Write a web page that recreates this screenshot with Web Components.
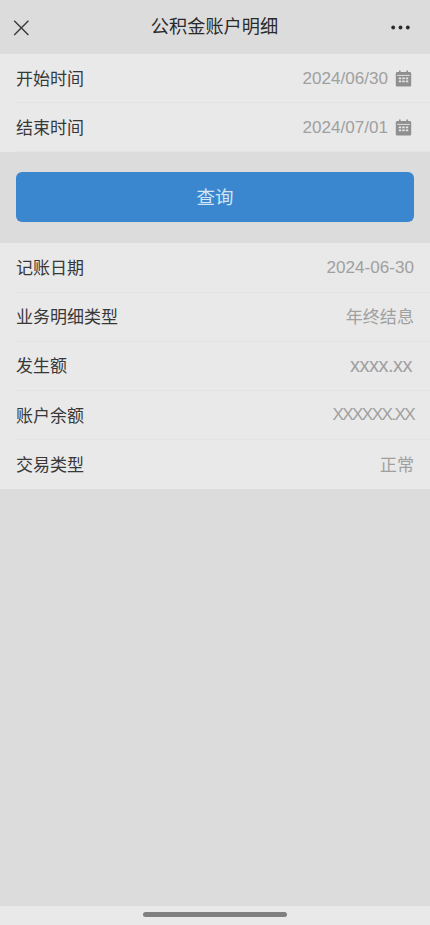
<!DOCTYPE html>
<html lang="zh">
<head>
<meta charset="utf-8">
<title>公积金账户明细</title>
<style>
    html, body { margin: 0; height: 100%; }
    body {
        font-family: "Liberation Sans", "Noto Sans CJK SC", sans-serif;
        background: #dcdcdc;
    }
    #page {
        height: 925px;
        display: flex;
        flex-direction: column;
    }
    .spacer { flex: 1; }
    .date { display: block; padding-top: 4px; }
    .small-x { display: block; padding-top: 2px; font-size: 20px; letter-spacing: -0.5px; margin-right: 2px; }
    .big-x { display: block; padding-top: 2px; letter-spacing: -1.6px; }
</style>
</head>
<body>
<div id="page">
    <nav-bar>公积金账户明细</nav-bar>
    <row-group>
        <info-row label="开始时间" calendar><span class="date">2024/06/30</span></info-row>
        <info-row label="结束时间" calendar><span class="date">2024/07/01</span></info-row>
    </row-group>
    <query-button>查询</query-button>
    <row-group>
        <info-row label="记账日期"><span class="date">2024-06-30</span></info-row>
        <info-row label="业务明细类型">年终结息</info-row>
        <info-row label="发生额"><span class="small-x">xxxx.xx</span></info-row>
        <info-row label="账户余额"><span class="big-x">XXXXXX.XX</span></info-row>
        <info-row label="交易类型" last>正常</info-row>
    </row-group>
    <div class="spacer"></div>
    <home-bar></home-bar>
</div>

<script>
class NavBar extends HTMLElement {
    constructor() {
        super();
        this.attachShadow({ mode: 'open' });
        this.shadowRoot.innerHTML = `
        <style>
            :host {
                display: grid;
                grid-template-columns: 1fr auto 1fr;
                align-items: center;
                height: 54px;
                padding: 0 20px 0 13px;
                box-sizing: border-box;
                background: #dcdcdc;
                color: #2a2a2a;
            }
            .title {
                font-size: 18.2px;
                line-height: 54px;
                position: relative;
                left: 3px;
            }
            svg { display: block; }
            .more { justify-self: end; }
        </style>
        <svg width="17" height="17" viewBox="0 0 17 17" fill="none" stroke="#3a3a3a" stroke-width="1.4">
            <path d="M1.2 1.7 L15.4 15.9 M15.4 1.7 L1.2 15.9"/>
        </svg>
        <span class="title"><slot></slot></span>
        <svg class="more" width="19" height="5" viewBox="0 0 19 5" fill="#2b2b2b">
            <circle cx="2.2" cy="2.5" r="1.9"/>
            <circle cx="9.5" cy="2.5" r="1.9"/>
            <circle cx="16.8" cy="2.5" r="1.9"/>
        </svg>`;
    }
}

class RowGroup extends HTMLElement {
    constructor() {
        super();
        this.attachShadow({ mode: 'open' });
        this.shadowRoot.innerHTML = `
        <style>
            :host {
                display: block;
                background: #e9e9e9;
            }
        </style>
        <slot></slot>`;
    }
}

class InfoRow extends HTMLElement {
    constructor() {
        super();
        this.attachShadow({ mode: 'open' });
        const icon = this.hasAttribute('calendar') ? `
        <svg class="cal" width="17" height="17" viewBox="0 0 17 17">
            <path fill="#8f8f8f" d="M4 0.5h1.6v1.6h5.8V0.5H13v1.6h1.6c.9 0 1.6.7 1.6 1.6v11.2c0 .9-.7 1.6-1.6 1.6H2.4c-.9 0-1.6-.7-1.6-1.6V3.7c0-.9.7-1.6 1.6-1.6H4z"/>
            <path fill="#e9e9e9" d="M2.2 4.9h12.6v.9H2.2z"/>
            <path fill="#e9e9e9" d="M3.8 7.6h2.4v1.6H3.8zM7.3 7.6h2.4v1.6H7.3zM10.8 7.6h2.4v1.6h-2.4zM3.8 10.6h2.4v1.6H3.8zM7.3 10.6h2.4v1.6H7.3zM10.8 10.6h2.4v1.6h-2.4z"/>
        </svg>` : '';
        this.shadowRoot.innerHTML = `
        <style>
            :host {
                display: block;
                padding-left: 16px;
            }
            .row {
                display: flex;
                align-items: center;
                justify-content: space-between;
                height: 49.2px;
                box-sizing: border-box;
                padding-right: 16px;
                padding-bottom: 2px;
                border-bottom: 1px solid #e3e3e3;
            }
            :host([calendar]) .row { padding-right: 17px; }
            :host([last]) .row { border-bottom: 0; }
            .label {
                font-size: 17px;
                color: #383838;
            }
            .value {
                display: flex;
                align-items: center;
                gap: 7px;
                font-size: 17.1px;
                color: #a0a0a0;
            }
            .cal { display: block; margin: 2px 1px 0 0; }
        </style>
        <div class="row">
            <span class="label">${this.getAttribute('label')}</span>
            <span class="value"><span><slot></slot></span>${icon}</span>
        </div>`;
    }
}

class QueryButton extends HTMLElement {
    constructor() {
        super();
        this.attachShadow({ mode: 'open' });
        this.shadowRoot.innerHTML = `
        <style>
            :host {
                display: block;
                padding: 20px 16px 21px;
                background: #dcdcdc;
            }
            button {
                display: block;
                width: 100%;
                height: 50px;
                padding: 0 0 2px;
                border: 0;
                border-radius: 6px;
                background: #3a87cf;
                color: #d3e5f3;
                font: inherit;
                font-size: 18.5px;
            }
        </style>
        <button><slot></slot></button>`;
    }
}

class HomeBar extends HTMLElement {
    constructor() {
        super();
        this.attachShadow({ mode: 'open' });
        this.shadowRoot.innerHTML = `
        <style>
            :host {
                display: flex;
                justify-content: center;
                height: 19px;
                padding-top: 6px;
                box-sizing: border-box;
                background: #e9e9e9;
            }
            div {
                width: 144px;
                height: 5px;
                border-radius: 3px;
                background: #808080;
            }
        </style>
        <div></div>`;
    }
}

customElements.define('nav-bar', NavBar);
customElements.define('row-group', RowGroup);
customElements.define('info-row', InfoRow);
customElements.define('query-button', QueryButton);
customElements.define('home-bar', HomeBar);
</script>
</body>
</html>
